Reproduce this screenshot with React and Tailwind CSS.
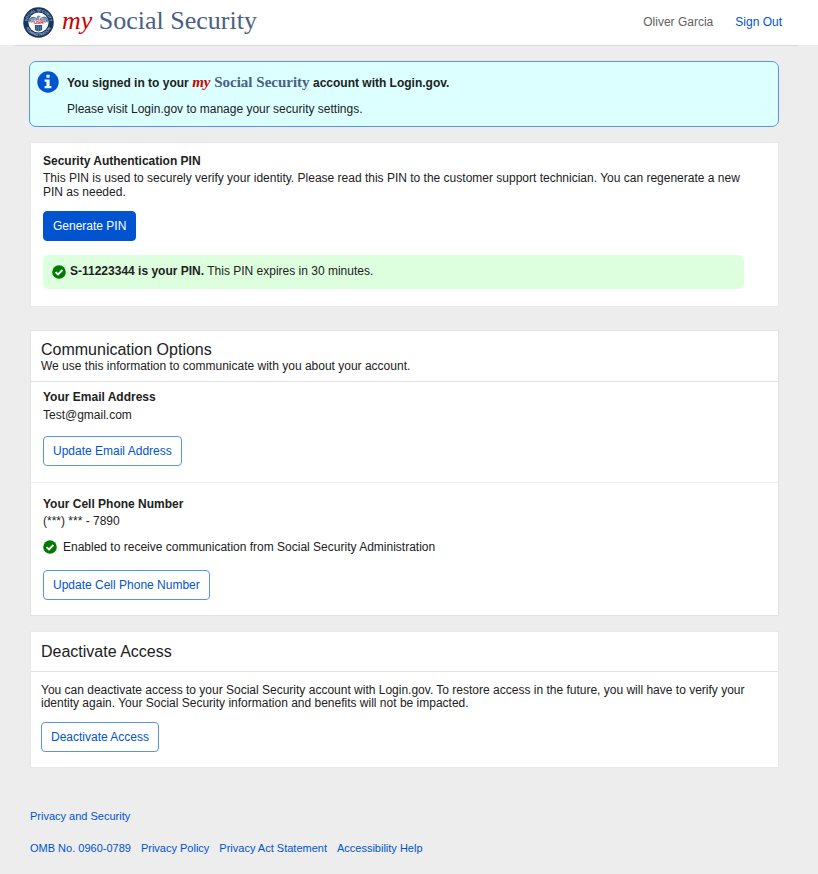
import React, { useState } from 'react';
import clsx from 'clsx';

const FOOTER_LINKS = [
  'OMB No. 0960-0789',
  'Privacy Policy',
  'Privacy Act Statement',
  'Accessibility Help',
];

function Seal() {
  return (
    <svg viewBox="0 0 120 120" className="h-[31px] w-[31px] shrink-0" aria-hidden="true">
      <defs>
        <path id="seal-top" d="M17 60a43 43 0 0 1 86 0" />
        <path id="seal-bottom" d="M8 60a52 52 0 0 0 104 0" />
      </defs>
      <circle cx="60" cy="60" r="59" fill="#16365f" />
      <circle cx="60" cy="60" r="39" fill="#fff" />
      <g fill="#a9bbd0" fontFamily="Liberation Sans" fontWeight="700" fontSize="14" textAnchor="middle">
        <text><textPath href="#seal-top" startOffset="50%">SOCIAL SECURITY</textPath></text>
        <text><textPath href="#seal-bottom" startOffset="50%">ADMINISTRATION</textPath></text>
      </g>
      {/* eagle wings, feathers and shield */}
      <path d="M56 48C49 36 36 35 25 44c-2 6-2 12 1 17l6-8 1 10 7-9 2 10 7-8 5 6z" fill="#54718f" />
      <path d="M64 48c7-12 20-13 31-4 2 6 2 12-1 17l-6-8-1 10-7-9-2 10-7-8-5 6z" fill="#54718f" />
      <path d="M29 48l22-5M31 53l20-4M91 48l-22-5M89 53l-20-4" stroke="#fff" strokeWidth="2" />
      <path d="M53 40c1-8 11-10 16-3l-6 3v9h-9z" fill="#7890aa" />
      <path d="M42 52h36v15H42z" fill="#fff" />
      <path d="M45 54v10h8V54M65 54h-8v5h7v5h-8M69 66V54h8v12M69 60h8" fill="none" stroke="#d8283b" strokeWidth="3" />
      <path d="M46 70h28v18q-3 5-14 7-11-2-14-7z" fill="#2f5078" />
      <path d="M53 72v19M60 72v20M67 72v19" stroke="#8fa3ba" strokeWidth="2" />
    </svg>
  );
}

function InfoIcon() {
  return (
    <svg viewBox="0 0 22 22" className="h-[22px] w-[22px] shrink-0" aria-hidden="true">
      <circle cx="11" cy="11" r="10.7" fill="#0054cf" />
      <path d="M9.4 3.8h3.2v3H9.4zM7.6 8.4h5v6.5h1.8v2.3H7.6v-2.3h1.8v-4.2H7.6z" fill="#e5ffff" />
    </svg>
  );
}

function CheckIcon() {
  return (
    <svg viewBox="0 0 14 14" className="h-3.5 w-3.5 shrink-0" aria-hidden="true">
      <circle cx="7" cy="7" r="6.8" fill="#007a00" />
      <path d="M3.6 7.1l2.4 2.3 4.4-4.4" fill="none" stroke="#fff" strokeWidth="1.9" />
    </svg>
  );
}

function Button({ primary, className, children, ...props }) {
  return (
    <button
      type="button"
      className={clsx(
        'flex h-[30px] items-center rounded-[4px] border px-[9px]',
        primary
          ? 'border-[#0054cf] bg-[#0054cf] text-white'
          : 'border-[#5b93e3] bg-white text-[#0054cf]',
        className
      )}
      {...props}
    >
      {children}
    </button>
  );
}

export default function App() {
  const [pin, setPin] = useState('S-11223344');

  const generatePin = () => {
    setPin(`S-${Math.floor(10000000 + Math.random() * 90000000)}`);
  };

  return (
    <div className="min-h-screen bg-[#ededed] pb-4 font-['Liberation_Sans',Arial,sans-serif] text-xs leading-[14px] text-[#212121]">
      <header className="bg-white">
        <div className="flex h-[45px] items-center justify-between pr-9 pl-[23px]">
          <a href="#" className="flex items-center gap-2 font-['Liberation_Serif',Georgia,serif] text-[26px] leading-8 text-[#496084]">
            <Seal />
            <span className="pb-1">
              <i className="text-[#cc0000]">my</i> Social Security
            </span>
          </a>
          <div className="flex gap-[22px] pb-0.5">
            <span className="text-[#616161]">Oliver Garcia</span>
            <a href="#" className="text-[#0054cf]">Sign Out</a>
          </div>
        </div>
      </header>
      <div className="mr-5 ml-[15px] border-t border-[#d8d8d8]" />

      <main className="mr-[39px] ml-[30px] pt-[15px]">
        <section className="-ml-px flex gap-2 rounded-[7px] border border-[#5b93e3] bg-[#dcffff] px-[7px] pt-[9px] pb-[10px]">
          <InfoIcon />
          <div className="pt-1">
            <p className="font-bold">
              You signed in to your{' '}
              <span className="font-['Liberation_Serif',Georgia,serif] text-[15px] leading-[14px] text-[#496084]">
                <i className="text-[#cc0000]">my</i> Social Security
              </span>{' '}
              account with Login.gov.
            </p>
            <p className="mt-3">Please visit Login.gov to manage your security settings.</p>
          </div>
        </section>

        <section className="mt-[15px] border border-[#e8e8e8] bg-white pt-[11px] pr-[34px] pb-[17px] pl-3">
          <h2 className="font-bold">Security Authentication PIN</h2>
          <p className="mt-[3px]">
            This PIN is used to securely verify your identity. Please read this PIN to the customer support technician. You can regenerate a new PIN as needed.
          </p>
          <Button primary className="mt-3" onClick={generatePin}>Generate PIN</Button>
          <div className="mt-3.5 flex h-[34px] items-center gap-1 rounded-md bg-[#ddffdd] pl-[9px]">
            <CheckIcon />
            <p className="pb-0.5">
              <b>{pin} is your PIN.</b> This PIN expires in 30 minutes.
            </p>
          </div>
        </section>

        <section className="mt-[23px] border border-[#e2e2e2] bg-white">
          <div className="border-b border-[#e2e2e2] px-2.5 pt-2.5 pb-2">
            <h2 className="text-base leading-[18px]">Communication Options</h2>
            <p>We use this information to communicate with you about your account.</p>
          </div>
          <div className="border-b border-[#f1f1f1] px-3 pt-2 pb-4">
            <h3 className="font-bold">Your Email Address</h3>
            <p className="mt-1">Test@gmail.com</p>
            <Button className="mt-3.5">Update Email Address</Button>
          </div>
          <div className="px-3 pt-3.5 pb-[15px]">
            <h3 className="font-bold">Your Cell Phone Number</h3>
            <p className="mt-[3px]">(***) *** - 7890</p>
            <p className="mt-3 flex items-center gap-1.5">
              <CheckIcon />
              Enabled to receive communication from Social Security Administration
            </p>
            <Button className="mt-4">Update Cell Phone Number</Button>
          </div>
        </section>

        <section className="mt-[15px] border border-[#e8e8e8] bg-white">
          <h2 className="border-b border-[#e2e2e2] px-2.5 pt-[11px] pb-[10px] text-base leading-[18px]">Deactivate Access</h2>
          <div className="px-2.5 pt-3 pb-[15px]">
            <p className="leading-[13px]">
              You can deactivate access to your Social Security account with Login.gov. To restore access in the future, you will have to verify your identity again. Your Social Security information and benefits will not be impacted.
            </p>
            <Button className="mt-3">Deactivate Access</Button>
          </div>
        </section>
      </main>

      <footer className="ml-[30px] pt-[41px] text-[11px] text-[#0054cf]">
        <a href="#">Privacy and Security</a>
        <nav className="mt-[18px] flex flex-wrap gap-2.5">
          {FOOTER_LINKS.map((label) => (
            <a key={label} href="#">{label}</a>
          ))}
        </nav>
      </footer>
    </div>
  );
}
